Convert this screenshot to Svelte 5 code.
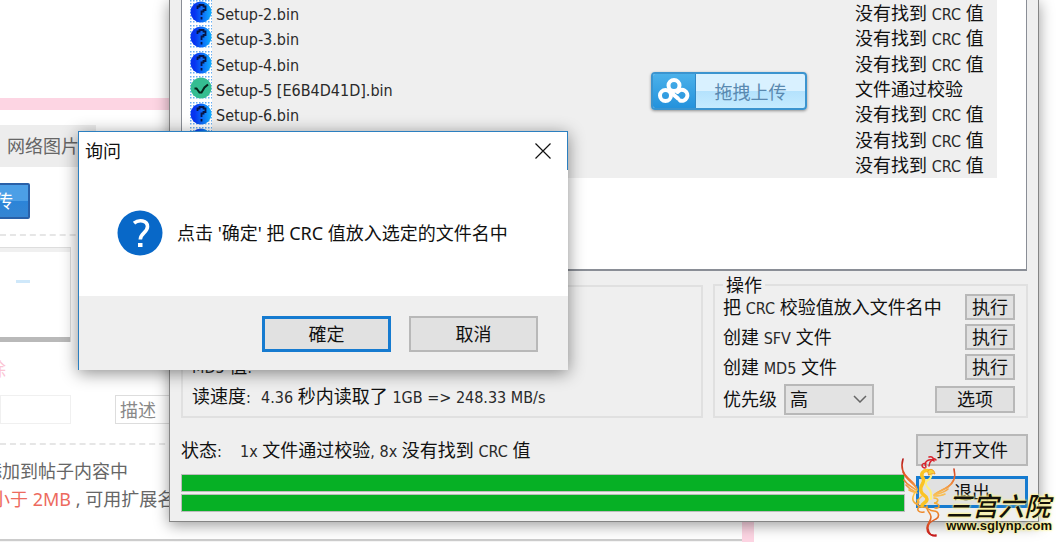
<script lang="ts">
	type FileRow = { name: string; status: string; ok?: boolean };

	const missing = '没有找到 CRC 值';

	const files: FileRow[] = [
		{ name: 'Setup-2.bin', status: missing },
		{ name: 'Setup-3.bin', status: missing },
		{ name: 'Setup-4.bin', status: missing },
		{ name: 'Setup-5 [E6B4D41D].bin', status: '文件通过校验', ok: true },
		{ name: 'Setup-6.bin', status: missing },
		{ name: 'Setup-7.bin', status: missing },
		{ name: 'Setup-8.bin', status: missing }
	];

	const actions = ['把 CRC 校验值放入文件名中', '创建 SFV 文件', '创建 MD5 文件'];

	let priority = $state('高');

	// Latin runs are set in a smaller UI face than the Chinese around them
	function runs(text: string) {
		return text.split(/([!-~]+(?: [!-~]+)*)/).filter((part) => part !== '');
	}
</script>

{#snippet mixed(text: string)}
	{#each runs(text) as part}{#if /^[!-~]/.test(part)}<span class="latin">{part}</span>{:else}{part}{/if}{/each}
{/snippet}

<main class="desktop">
	<section class="page">
		<div class="page-body">
			<a class="tab" href="#network">网络图片</a>
			<div class="upload-row"><button class="upload">上传</button></div>
			<div class="thumb">
				<i class="thumb-head"></i>
				<i class="thumb-mark"></i>
				<i class="thumb-bar"></i>
			</div>
			<a class="remove" href="#remove">删除</a>
			<div class="fields">
				<input aria-label="名称" />
				<input aria-label="描述" placeholder="描述" />
			</div>
			<div class="notes">
				<p>添加到帖子内容中</p>
				<p class="limit"><em>小于 2MB</em> , 可用扩展名</p>
			</div>
		</div>
	</section>

	<section class="window">
		<div class="list">
			<table>
				<tbody>
					{#each files as file}
						<tr>
							<td class="mark">
								<svg viewBox="0 0 22 24" width="22" height="24">
									<defs>
										<linearGradient id="blue" x1="0" x2="1">
											<stop offset="0.2" stop-color="#0734f0" />
											<stop offset="1" stop-color="#10b0ff" />
										</linearGradient>
										<pattern id="dots" width="3" height="3" patternUnits="userSpaceOnUse">
											<rect width="1.5" height="1.5" fill="#68aef2" />
										</pattern>
									</defs>
									<rect width="22" height="24" fill="url(#dots)" />
									{#if file.ok}
										<circle cx="11" cy="12" r="10.5" fill="#35bd91" />
										<path d="M4.500 12.500h2l3 4h2l3-5 3.500-3" fill="none" stroke="#06251d" stroke-width="2" />
									{:else}
										<circle cx="11" cy="12" r="10.500" fill="url(#blue)" />
										<path d="M7.500 9V6.500h2V5h4v1.500h2V10h-2v1.500h-2V15M11.500 17v2.500" fill="none" stroke="#061547" stroke-width="1.800" />
									{/if}
								</svg>
							</td>
							<td class="name"><span class="latin">{file.name}</span></td>
							<td class="status">{@render mixed(file.status)}</td>
						</tr>
					{/each}
				</tbody>
			</table>
			<button class="drop">
				<span class="drop-icon">
					<svg viewBox="0 0 32 26" width="32" height="26" fill="none" stroke="#fff" stroke-width="4" stroke-linecap="round">
						<circle cx="16" cy="7.500" r="5.500" />
						<circle cx="7.500" cy="17.500" r="5.500" />
						<path d="M19.500 14a5.500 5.500 0 1 1 2.500 8.500" />
						<path d="M12 13.500l8 7" />
					</svg>
				</span>
				<span class="drop-text">拖拽上传</span>
			</button>
		</div>

		<div class="groups">
			<div class="info">
				<p>{@render mixed('MD5 值')}<span class="latin">:</span></p>
				<p><span class="label">读速度<span class="latin">:</span></span>{@render mixed('4.36 秒内读取了 1GB => 248.33 MB/s')}</p>
			</div>
			<fieldset>
				<legend>操作</legend>
				{#each actions as action}
					<div class="action">
						<span>{@render mixed(action)}</span>
						<button class="run" aria-label="执行 {action}">执行</button>
					</div>
				{/each}
				<div class="action last">
					<label for="priority">优先级</label>
					<span class="select">
						<select id="priority" bind:value={priority}>
							<option>高</option>
							<option>中</option>
							<option>低</option>
						</select>
						<svg viewBox="0 0 14 8" width="14" height="8" fill="none" stroke="#666" stroke-width="1.500">
							<path d="M1 1l6 6 6-6" />
						</svg>
					</span>
					<button class="options">选项</button>
				</div>
			</fieldset>
		</div>

		<div class="bottom">
			<div class="state">
				<p><span class="state-label">状态<span class="latin">:</span></span>{@render mixed('1x 文件通过校验, 8x 没有找到 CRC 值')}</p>
				<progress value="1" max="1" aria-label="当前文件"></progress>
				<progress value="1" max="1" aria-label="全部文件"></progress>
			</div>
			<div class="commands">
				<button>打开文件</button>
				<button class="focused">退出</button>
			</div>
		</div>
	</section>

	<div class="dialog" role="dialog" aria-labelledby="dialog-title">
		<header>
			<h1 id="dialog-title">询问</h1>
			<button class="close" aria-label="关闭">
				<svg viewBox="0 0 16 16" width="16" height="16" stroke="#111" stroke-width="1.200">
					<path d="M0.500 0.500l15 15M15.500 0.500l-15 15" />
				</svg>
			</button>
		</header>
		<div class="message">
			<svg viewBox="0 0 46 46" width="46" height="46">
				<circle cx="23" cy="23" r="22.500" fill="#0868c8" />
				<path d="M17 13.200c5-4.200 13.500-2.800 13.500 3.300 0 6.200-7.200 6.500-7.200 13" fill="none" stroke="#fff" stroke-width="3.600" />
				<rect x="21" y="33" width="4.500" height="4" fill="#fff" />
			</svg>
			<p>点击 '确定' 把 CRC 值放入选定的文件名中</p>
		</div>
		<footer>
			<button class="focused">確定</button>
			<button>取消</button>
		</footer>
	</div>

	<div class="watermark">
		<svg viewBox="0 0 60 86" width="60" height="86" fill="none" stroke-linecap="round">
			<defs>
				<linearGradient id="wing" gradientUnits="userSpaceOnUse" x1="0" y1="6" x2="0" y2="42">
					<stop offset="0" stop-color="#b3161a" />
					<stop offset="0.5" stop-color="#e8602a" />
					<stop offset="1" stop-color="#f8bf55" />
				</linearGradient>
				<linearGradient id="tail" gradientUnits="userSpaceOnUse" x1="0" y1="44" x2="0" y2="84">
					<stop offset="0" stop-color="#fbc540" />
					<stop offset="0.4" stop-color="#ee8a2c" />
					<stop offset="1" stop-color="#c4181c" />
				</linearGradient>
			</defs>
			<g stroke="url(#wing)" stroke-width="1.600">
				<path d="M5 7C2 17 6 23 11 27c4 3 6 6 8 10" />
				<path d="M5 20c2 6 7 9 13 15" />
				<path d="M6 28c3 5 7 6 12 10" />
				<path d="M8 33c3 4 6 5 10 7" />
				<path d="M11 38c3 2 5 2 8 3" />
				<path d="M56 17c2 8 0 14-6 18-5 3-9 4-14 8" />
				<path d="M55 29c-3 6-9 8-18 13" />
				<path d="M50 37c-4 4-8 4-14 6" />
				<path d="M47 42c-4 2-7 2-11 2" />
			</g>
			<g stroke="url(#tail)" stroke-width="1.600">
				<path d="M19 38c-4 4-6 10-2 13s5-3 2-3" />
				<path d="M24 44c-6 5-7 11 1 11 6 0 5 4 11 4 5 0 6 6 2 8s-9 4-8 10 4 7 8 7" />
				<path d="M29 54c-1 6 4 6 4 11s-4 6-4 11 3 8 9 7" />
				<path d="M21 55c-3 3 0 6 5 5" />
				<path d="M36 46c6 0 4 5 0 5 7 1 6 6 1 5" />
			</g>
			<path d="M32 19c-7-2-10 3-7 7 3 5-4 7-2 13 1 5 6 4 6 8s-5 4-5 7" stroke="#fbc324" stroke-width="3.500" />
			<path d="M31 20c4 1 2 7-1 8-4 2-2 6 1 9s2 7 2 10" stroke="#fff07c" stroke-width="2" />
			<path d="M30 19c2-3 6-2 7 3-2-1-4 0-6 1z" fill="#fbd437" stroke="#f09a23" />
			<path d="M27 16c-5-1-3-6 1-4M28 15c-3-6 4-9 8-6M31 14c1-6 5-9 7-6M36 9c0-3-2-5-5-4" stroke="#d8222c" stroke-width="1.500" />
		</svg>
		<div class="brand">
			<strong>三宫六院</strong>
			<span>www.sglynp.com</span>
		</div>
	</div>
</main>

<style>
	:global(body) {
		margin: 0;
		background: #fff;
	}

	.desktop {
		position: relative;
		min-height: 100vh;
		overflow: hidden;
		box-sizing: border-box;
		font: 18px/24px 'Noto Sans', 'Noto Sans CJK SC', sans-serif;
		color: #111;
	}

	.desktop * {
		box-sizing: border-box;
	}

	p,
	h1 {
		margin: 0;
		font-size: 18px;
		font-weight: 400;
		white-space: pre;
	}

	button,
	input,
	select {
		margin: 0;
		padding: 0;
		font: inherit;
		color: inherit;
	}

	svg {
		display: block;
		flex: none;
	}

	.latin {
		font-family: 'DejaVu Sans Condensed', 'DejaVu Sans', sans-serif;
		font-size: 16px;
		line-height: 1;
		color: #2a2a2a;
	}

	/* web page behind the windows */
	.page {
		position: absolute;
		inset: 98px auto 0 0;
		width: 754px;
		max-width: 100%;
		border: solid #fdd5e3;
		border-width: 12px 12px 0 0;
		background: #f5f5f5;
		color: #666;
	}

	.page-body {
		display: flex;
		flex-direction: column;
		align-items: flex-start;
		height: 431px;
		padding-top: 15px;
		border-bottom: 2px solid #ccc;
		background: #fff;
	}

	.tab {
		width: 96px;
		height: 42px;
		padding: 0 7px;
		line-height: 42px;
		background: #ededed;
		color: #666;
		text-decoration: none;
	}

	.upload-row {
		align-self: stretch;
		height: 69px;
		padding-top: 16px;
		border-bottom: 2px dashed #e6e6e6;
	}

	.upload {
		width: 66px;
		height: 36px;
		margin-left: -36px;
		padding-right: 4px;
		border: 2px solid #2960a8;
		border-radius: 2px;
		background: linear-gradient(#4c9fe6 50%, #2b84d8 50%, #3585d2);
		color: #fff;
	}

	.thumb {
		display: flex;
		flex-direction: column;
		width: 71px;
		height: 95px;
		margin-top: 11px;
		border: solid #ddd;
		border-width: 1px 1px 0 0;
	}

	.thumb-head {
		height: 4px;
		background: #f0f0f0;
	}

	.thumb-mark {
		width: 14px;
		height: 3px;
		margin: 28px 0 auto 16px;
		background: #cfe8fa;
	}

	.thumb-bar {
		height: 5px;
		background: #b9b9b9;
	}

	.remove {
		margin: 15px 0 0 -30px;
		color: #fbc5d4;
		text-decoration: none;
	}

	.fields {
		display: flex;
		align-self: stretch;
		gap: 44px;
		height: 50px;
		margin-top: 14px;
		border-bottom: 2px dashed #e6e6e6;
	}

	.fields input {
		width: 120px;
		height: 29px;
		padding: 0 4px;
		border: 1px solid #ddd;
		background: #fff;
	}

	.fields input:first-child {
		width: 71px;
		border-color: #f0f0f0;
	}

	.fields input::placeholder {
		color: #888;
		opacity: 1;
	}

	.notes {
		margin: 12px 0 0 -16px;
	}

	.notes p {
		line-height: 28px;
	}

	.limit {
		padding-left: 8px;
	}

	.limit em {
		font-style: normal;
		color: #ed6a5e;
	}

	/* checksum window */
	.window {
		position: absolute;
		top: 0;
		left: 169px;
		right: 17px;
		padding: 0 10px 9px 11px;
		border: 1px solid #858585;
		border-top: 0;
		background: #efefef;
		box-shadow: 0 3px 14px rgba(0, 0, 0, 0.4);
	}

	.window button,
	.dialog footer button {
		border: 2px solid #b8b8b8;
		background: #e1e1e1;
		line-height: 20px;
	}

	.window button.focused,
	.dialog footer button.focused {
		border: 3px solid #167bd0;
	}

	.list {
		position: relative;
		height: 271px;
		margin-right: 1px;
		padding-right: 29px;
		border: 2px solid #8a8e96;
		border-width: 0 1px 2px;
		background: #fff;
	}

	table {
		width: 100%;
		height: 178px;
		border-collapse: collapse;
		background: #efefef;
	}

	td {
		padding: 0;
		line-height: 22px;
		white-space: nowrap;
	}

	.mark {
		width: 30px;
		padding-left: 8px;
		background: #fff;
		vertical-align: top;
	}

	.name {
		padding-left: 4px;
	}

	.status {
		width: 142px;
	}

	.window button.drop {
		position: absolute;
		top: 72px;
		left: 469px;
		display: flex;
		width: 156px;
		height: 38px;
		padding: 0;
		border: 2px solid #3b94cf;
		border-radius: 4px;
		background: linear-gradient(#d9f1ff 50%, #b4e2fd 50%, #c5ebff);
		box-shadow: 0 1px 3px rgba(0, 0, 0, 0.4);
		overflow: hidden;
	}

	.drop-icon {
		display: grid;
		place-items: center;
		width: 43px;
		height: 34px;
		border-right: 1px solid #3187c4;
		background: linear-gradient(#4bb1ea, #2492dc);
	}

	.drop-text {
		flex: 1;
		line-height: 36px;
		color: #5989b0;
	}

	.groups {
		display: grid;
		grid-template-columns: 1fr 315px;
		gap: 10px;
		margin-top: 5px;
	}

	.info {
		display: flex;
		flex-direction: column;
		justify-content: flex-end;
		gap: 6px;
		margin-top: 9px;
		padding: 0 9px 8px;
		border: 2px solid #e0e0e0;
	}

	.label {
		display: inline-block;
		width: 69px;
	}

	fieldset {
		display: flex;
		flex-direction: column;
		gap: 4px;
		min-width: 0;
		margin: 0;
		padding: 0 11px 2px 8px;
		border: 2px solid #e0e0e0;
	}

	legend {
		margin-left: 0;
		padding: 0 3px;
		line-height: 18px;
	}

	.action {
		display: flex;
		justify-content: space-between;
		align-items: center;
		height: 26px;
		white-space: pre;
	}

	.run {
		width: 50px;
		height: 26px;
	}

	.action.last {
		height: 30px;
	}

	.select {
		display: grid;
		align-items: center;
		width: 90px;
		margin: 0 auto 0 7px;
	}

	.select select,
	.select svg {
		grid-area: 1 / 1;
	}

	.select select {
		height: 31px;
		padding-left: 4px;
		appearance: none;
		border: 2px solid #b8b8b8;
		border-radius: 0;
		background: #e3e3e3;
	}

	.select svg {
		justify-self: end;
		margin-right: 7px;
		pointer-events: none;
	}

	.options {
		width: 80px;
		height: 27px;
	}

	.bottom {
		display: grid;
		grid-template-columns: 1fr 112px;
		gap: 11px;
		margin-top: 16px;
	}

	.state p {
		height: 32px;
		margin-bottom: 8px;
		line-height: 32px;
	}

	.state-label {
		display: inline-block;
		width: 59px;
	}

	progress {
		display: block;
		width: 100%;
		height: 18px;
		margin-bottom: 2px;
		appearance: none;
		border: 1px solid #bcbcbc;
		background: #e6e6e6;
	}

	progress:last-child {
		margin-bottom: 0;
	}

	progress::-webkit-progress-bar {
		background: #e6e6e6;
	}

	progress::-webkit-progress-value {
		background: #06b025;
	}

	.commands {
		display: flex;
		flex-direction: column;
		gap: 10px;
	}

	.commands button {
		height: 32px;
	}

	/* message box */
	.dialog {
		position: absolute;
		top: 131px;
		left: 78px;
		width: 490px;
		border: solid #2b7fc0;
		border-width: 1px 0 0 1px;
		background: #fff;
		box-shadow: 0 3px 16px rgba(0, 0, 0, 0.45);
	}

	.dialog header {
		display: flex;
		justify-content: space-between;
		align-items: center;
		height: 38px;
		padding: 0 16px 0 6px;
		border-right: 1px solid #2b7fc0;
	}

	.close {
		border: 0;
		background: none;
	}

	.message {
		display: flex;
		align-items: center;
		gap: 14px;
		height: 126px;
		padding-left: 38px;
	}

	.dialog footer {
		display: flex;
		justify-content: flex-end;
		gap: 18px;
		padding: 20px 30px 18px;
		background: #efefef;
	}

	.dialog footer button {
		width: 129px;
		height: 36px;
	}

	/* site mark laid over the lower right corner */
	.watermark {
		position: absolute;
		right: 4px;
		bottom: 4px;
		display: flex;
		align-items: flex-end;
		pointer-events: none;
	}

	.watermark svg {
		margin-right: -12px;
	}

	.brand {
		display: flex;
		flex-direction: column;
		margin-bottom: 4px;
		color: #14120a;
		text-shadow:
			0 0 2px #fff38a,
			0 0 2px #fff38a,
			0 0 3px #fff38a;
	}

	.brand strong {
		font: italic 500 26px/26px 'Noto Sans CJK SC', sans-serif;
	}

	.brand span {
		font: bold 13px/16px 'Liberation Sans', Arial, sans-serif;
	}
</style>
